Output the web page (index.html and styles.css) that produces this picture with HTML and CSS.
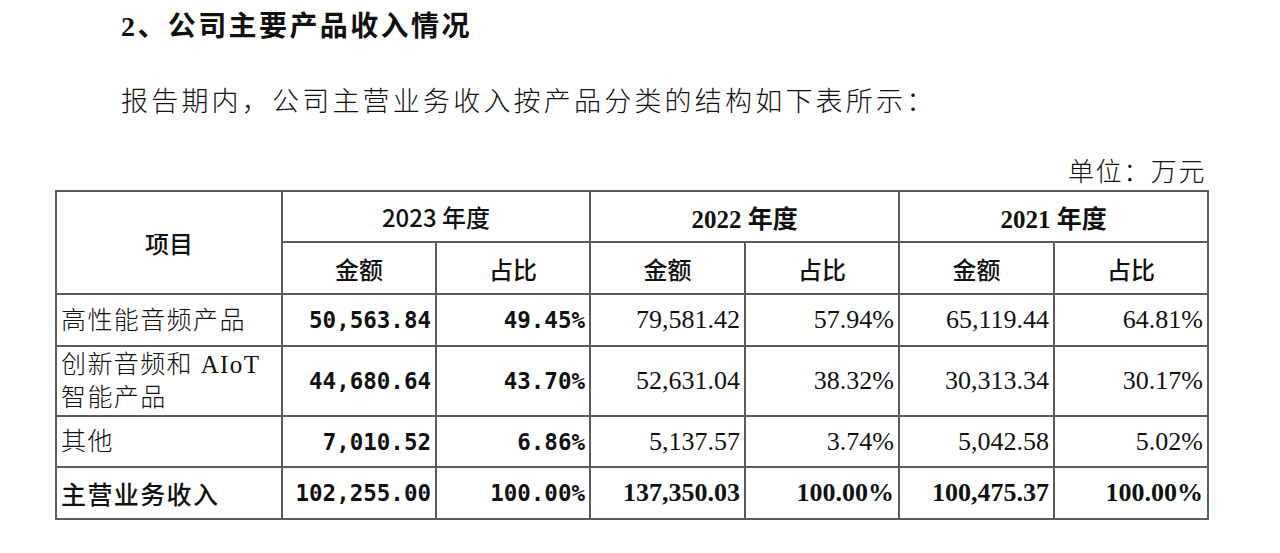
FILE: index.html
```html
<!DOCTYPE html>
<html lang="zh-CN">
<head>
<meta charset="utf-8">
<title>公司主要产品收入情况</title>
<link rel="stylesheet" href="styles.css">
</head>
<body>
<div class="page">
  <h2 class="title"><span class="lat">2</span>、公司主要产品收入情况</h2>
  <p class="intro">报告期内，公司主营业务收入按产品分类的结构如下表所示：</p>
  <div class="unit">单位：万元</div>
  <table class="data">
    <colgroup>
      <col class="c-item">
      <col class="c-a"><col class="c-b">
      <col class="c-c"><col class="c-d">
      <col class="c-e"><col class="c-f">
    </colgroup>
    <thead>
      <tr class="h1">
        <th rowspan="2" class="hsans">项目</th>
        <th colspan="2" class="hsans">2023 年度</th>
        <th colspan="2" class="hserif">2022 年度</th>
        <th colspan="2" class="hserif">2021 年度</th>
      </tr>
      <tr class="h2">
        <th class="hsans">金额</th><th class="hsans">占比</th>
        <th class="hsans">金额</th><th class="hsans">占比</th>
        <th class="hsans">金额</th><th class="hsans">占比</th>
      </tr>
    </thead>
    <tbody>
      <tr class="r1">
        <td class="lbl">高性能音频产品</td>
        <td class="mono">50,563.84</td><td class="mono">49.45%</td>
        <td class="num">79,581.42</td><td class="num">57.94%</td>
        <td class="num">65,119.44</td><td class="num">64.81%</td>
      </tr>
      <tr class="r2">
        <td class="lbl">创新音频和 AIoT<br>智能产品</td>
        <td class="mono">44,680.64</td><td class="mono">43.70%</td>
        <td class="num">52,631.04</td><td class="num">38.32%</td>
        <td class="num">30,313.34</td><td class="num">30.17%</td>
      </tr>
      <tr class="r3">
        <td class="lbl">其他</td>
        <td class="mono">7,010.52</td><td class="mono">6.86%</td>
        <td class="num">5,137.57</td><td class="num">3.74%</td>
        <td class="num">5,042.58</td><td class="num">5.02%</td>
      </tr>
      <tr class="r4 total">
        <td class="lbl tl">主营业务收入</td>
        <td class="mono">102,255.00</td><td class="mono">100.00%</td>
        <td class="num b">137,350.03</td><td class="num b">100.00%</td>
        <td class="num b">100,475.37</td><td class="num b">100.00%</td>
      </tr>
    </tbody>
  </table>
</div>
</body>
</html>
```

FILE: styles.css
```css
html, body {
  margin: 0;
  padding: 0;
  background: #ffffff;
  color: #111111;
}

.page {
  width: 1280px;
  height: 553px;
  overflow: hidden;
  font-family: "Liberation Serif", "Noto Sans CJK SC", serif;
}

.title {
  margin: 13px 0 0 121px;
  font-size: 28px;
  line-height: 28px;
  font-weight: 700;
  letter-spacing: 2.4px;
}

.title .lat {
  font-family: "Liberation Serif", serif;
}

.intro {
  margin: 47px 0 0 121px;
  font-size: 27px;
  line-height: 28px;
  font-weight: 300;
  letter-spacing: 3.2px;
}

.unit {
  margin: 44px 0 0 0;
  width: 1206px;
  text-align: right;
  font-size: 26px;
  line-height: 26px;
  font-weight: 300;
  letter-spacing: 1.6px;
}

.data {
  margin: 4px 0 0 55px;
  border-collapse: collapse;
  table-layout: fixed;
  width: 1152px;
}

.c-item { width: 226px; }
.c-a { width: 154px; }
.c-b { width: 154px; }
.c-c { width: 155px; }
.c-d { width: 154px; }
.c-e { width: 155px; }
.c-f { width: 154px; }

.data th,
.data td {
  border: 2px solid #5c5c5c;
  padding: 0 4px;
  vertical-align: middle;
  white-space: nowrap;
}

.h1 { height: 51px; }
.h2 { height: 52px; }
.r1 { height: 52px; }
.r2 { height: 70px; }
.r3 { height: 51px; }
.r4 { height: 52px; }

.hsans {
  font-family: "Noto Sans CJK SC", sans-serif;
  font-size: 24px;
  font-weight: 500;
  text-align: center;
}

.hserif {
  font-family: "Liberation Serif", "Noto Sans CJK SC", serif;
  font-size: 25px;
  font-weight: 700;
  text-align: center;
}

.lbl {
  font-family: "Liberation Serif", "Noto Sans CJK SC", serif;
  font-size: 25px;
  font-weight: 300;
  line-height: 33px;
  letter-spacing: 1.4px;
  text-align: left;
  padding-left: 3px;
}

.tl {
  font-family: "Noto Sans CJK SC", sans-serif;
  font-weight: 500;
  letter-spacing: 1.4px;
}

.mono {
  font-family: "DejaVu Sans Mono", monospace;
  font-size: 22.5px;
  font-weight: 700;
  text-align: right;
  padding-right: 3px;
}

.num {
  font-family: "Liberation Serif", serif;
  font-size: 26px;
  text-align: right;
  padding-right: 3px;
}

.num.b {
  font-weight: 700;
}
```
